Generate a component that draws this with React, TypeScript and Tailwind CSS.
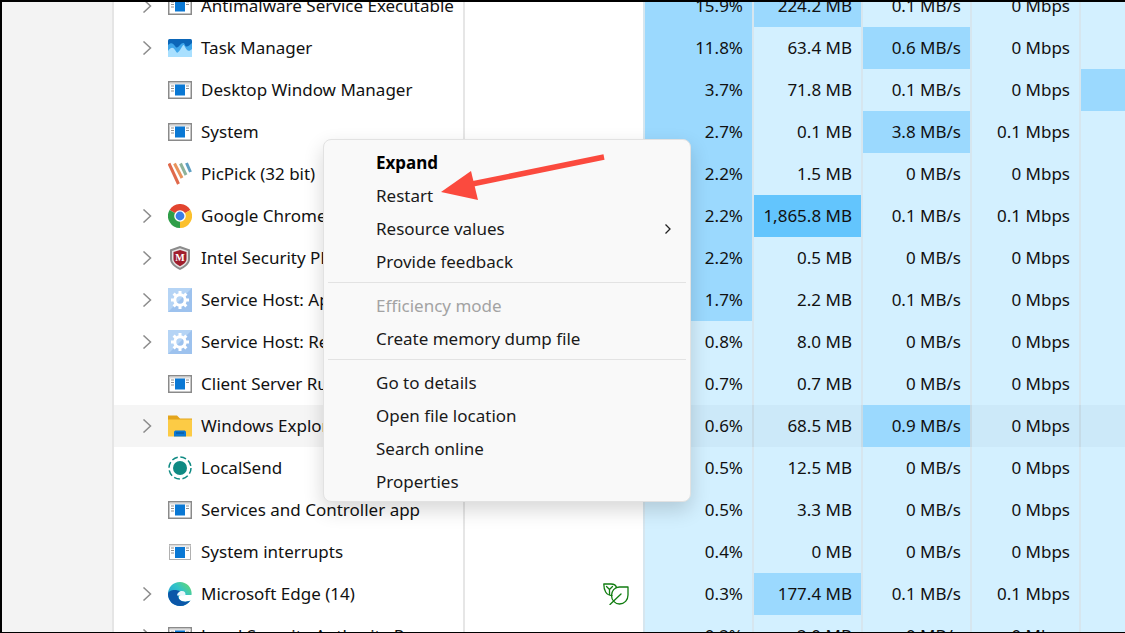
const AppIcon = ({ small }: { small?: boolean }) => (
  <svg width="24" height="24" viewBox="0 0 24 24">
    {small ? (
      <rect x="1.5" y="4.5" width="21" height="15" fill="#fff" stroke="#b0b0b0" />
    ) : (
      <rect x="0.75" y="3.75" width="22.5" height="16.5" fill="#fff" stroke="#8a8a8a" strokeWidth="1.5" />
    )}
    <rect x="1.5" y="5" width="21" height="1.5" fill="#dcdcdc" />
    <rect x="7" y={small ? 7 : 6.5} width="10" height="11" fill="#0a78d4" />
    <path d="M3 8h3M3 10.500h3M3 13h3M18 8h3M18 10.500h3" stroke="#8f8f8f" strokeWidth="1" />
  </svg>
)

const TaskIcon = () => (
  <svg width="24" height="24" viewBox="0 0 24 24">
    <rect y="3" width="24" height="18" rx="1.500" fill="#0b66b8" />
    <path d="M0 9c3-3 5-2 7 1s3 1 5-1 4-3 5 0 4 1 7-2v14H0z" fill="#3fa6ea" />
    <path d="M0 15c3-4 5-4 7-1s2 4 5 0 3-7 5-3 4 5 7 2v8H0z" fill="#a9e0ff" />
  </svg>
)

const PicPickIcon = () => (
  <svg width="24" height="24" viewBox="0 0 24 24">
    <path d="M1 1.500 10.500 22" stroke="#e0694b" strokeWidth="3" />
    <path d="M6.500 1.500 14 16" stroke="#e8935c" strokeWidth="3" />
    <path d="M12.500 1.500 18 13" stroke="#8db39a" strokeWidth="3" />
    <path d="M18.500 1 22.500 10" stroke="#5d9fc2" strokeWidth="3" />
  </svg>
)

const ChromeIcon = () => (
  <svg width="24" height="24" viewBox="0 0 24 24">
    <path d="M12 12 1.600 6A12 12 0 0 1 22.400 6Z" fill="#e2442f" />
    <path d="M12 12 22.400 6A12 12 0 0 1 12 24Z" fill="#fbc02d" />
    <path d="M12 12V24A12 12 0 0 1 1.600 6Z" fill="#2f9e48" />
    <circle cx="12" cy="12" r="5.800" fill="#fff" />
    <circle cx="12" cy="12" r="4.400" fill="#3b7de8" />
  </svg>
)

const ShieldIcon = () => (
  <svg width="24" height="24" viewBox="0 0 24 24">
    <path d="M2 3.500 12 0l10 3.500V13c0 5-5 8.500-10 11C7 21.500 2 18 2 13Z" fill="#8b8b8b" />
    <path d="M4 5 12 2.300 20 5v8c0 4-4 6.800-8 8.800C8 19.800 4 17 4 13Z" fill="#e4e4e4" />
    <path d="M5.500 6 12 4l6.500 2v7c0 3.200-3.200 5.500-6.500 7.200C8.700 18.500 5.500 16.200 5.500 13Z" fill="#a01f2d" />
    <text x="12" y="14.500" textAnchor="middle" fontSize="10" fontWeight="700" fill="#fff" fontFamily="Liberation Serif, serif">M</text>
  </svg>
)

const GearIcon = () => (
  <svg width="24" height="24" viewBox="0 0 24 24">
    <rect width="24" height="24" fill="#b5d4f5" />
    <path d="M0 24 24 0v24z" fill="#9dc2ee" />
    <circle cx="12" cy="12" r="5.200" fill="none" stroke="#fff" strokeWidth="3" />
    {[0, 45, 90, 135, 180, 225, 270, 315].map((a) => (
      <rect key={a} x="10.500" y="3" width="3" height="4" fill="#fff" transform={`rotate(${a} 12 12)`} />
    ))}
  </svg>
)

const FolderIcon = () => (
  <svg width="24" height="24" viewBox="0 0 24 24">
    <path d="M0 1.500h9l3 3h12v3H0z" fill="#e4a51c" />
    <rect y="5.500" width="24" height="17" rx="0.500" fill="#fccb45" />
    <path d="M6 22.500v-4c0-1.500 1-2 2-2h8c1 0 2 .5 2 2v4z" fill="#0a78d4" />
    <rect x="8" y="18.500" width="8" height="1" fill="#074f8c" />
  </svg>
)

const LocalSendIcon = () => (
  <svg width="24" height="24" viewBox="0 0 24 24">
    <circle cx="12" cy="12" r="7" fill="#0f8a83" />
    <circle cx="12" cy="12" r="11" fill="none" stroke="#0f8a83" strokeWidth="1.500" strokeDasharray="6 2.640" />
  </svg>
)

const EdgeIcon = () => (
  <svg width="24" height="24" viewBox="0 0 24 24">
    <defs>
      <linearGradient id="edgeTop" x1="0" y1="1" x2="1" y2="0">
        <stop offset="0" stopColor="#1b8fdc" />
        <stop offset="0.600" stopColor="#33c4c8" />
        <stop offset="1" stopColor="#6fdc5e" />
      </linearGradient>
    </defs>
    <path d="M12 0C5 0 0 5.500 0 12c0 7 5.500 12 12 12 4.500 0 8-2 10.500-5.500-3 1.500-8 1.800-10.500-.500-2-2-1.500-5 1-5h10.500C24.500 6 19 0 12 0Z" fill="url(#edgeTop)" />
    <path d="M0 12c0 7 5.500 12 12 12 4.500 0 8-2 10.500-5.500-3 1.500-8 1.800-10.500-.500-3-3-2-6 .5-8.500C9 7.500 1 7 0 12Z" fill="#0b57a8" />
    <path d="M9 14c0-3 2.500-5 5-5s3.500 1.500 3.500 3.500c0 .500-.500 1-1.500 1H9Z" fill="#e8f7fb" />
  </svg>
)

const LeafIcon = () => (
  <svg width="26" height="22" viewBox="0 0 26 22" fill="none" stroke="#107c10" strokeWidth="1.300" strokeLinejoin="round" strokeLinecap="round">
    <path d="M9 12.500C3 12.500 .8 7 .8 1H8c3 0 5 1.500 5.500 3.500" />
    <path d="M3.500 3.500 6.500 6.500 9.500 3.500M6.500 6.500V11.500" />
    <path d="M25 4H16.500C11.500 4 8.500 8 8.500 12.500 8.500 17.500 12.500 21 16.500 21 21.500 21 25 17 25 12Z" />
    <path d="M7 21.500 18 11" />
  </svg>
)

type Row = {
  name: string
  icon: React.ReactNode
  chevron?: boolean
  hover?: boolean
  leaf?: boolean
  cpu: string
  mem: string
  disk: string
  net: string
  heat: number[]
}

const rows: Row[] = [
  { name: 'Antimalware Service Executable', icon: <AppIcon />, chevron: true, cpu: '15.9%', mem: '224.2 MB', disk: '0.1 MB/s', net: '0 Mbps', heat: [1, 1, 0, 0, 0] },
  { name: 'Task Manager', icon: <TaskIcon />, chevron: true, cpu: '11.8%', mem: '63.4 MB', disk: '0.6 MB/s', net: '0 Mbps', heat: [1, 0, 1, 0, 0] },
  { name: 'Desktop Window Manager', icon: <AppIcon />, cpu: '3.7%', mem: '71.8 MB', disk: '0.1 MB/s', net: '0 Mbps', heat: [1, 0, 0, 0, 1] },
  { name: 'System', icon: <AppIcon />, cpu: '2.7%', mem: '0.1 MB', disk: '3.8 MB/s', net: '0.1 Mbps', heat: [1, 0, 1, 0, 0] },
  { name: 'PicPick (32 bit)', icon: <PicPickIcon />, cpu: '2.2%', mem: '1.5 MB', disk: '0 MB/s', net: '0 Mbps', heat: [1, 0, 0, 0, 0] },
  { name: 'Google Chrome', icon: <ChromeIcon />, chevron: true, cpu: '2.2%', mem: '1,865.8 MB', disk: '0.1 MB/s', net: '0.1 Mbps', heat: [1, 2, 0, 0, 0] },
  { name: 'Intel Security PE', icon: <ShieldIcon />, chevron: true, cpu: '2.2%', mem: '0.5 MB', disk: '0 MB/s', net: '0 Mbps', heat: [1, 0, 0, 0, 0] },
  { name: 'Service Host: Ap', icon: <GearIcon />, chevron: true, cpu: '1.7%', mem: '2.2 MB', disk: '0.1 MB/s', net: '0 Mbps', heat: [1, 0, 0, 0, 0] },
  { name: 'Service Host: Re', icon: <GearIcon />, chevron: true, cpu: '0.8%', mem: '8.0 MB', disk: '0 MB/s', net: '0 Mbps', heat: [0, 0, 0, 0, 0] },
  { name: 'Client Server Ru', icon: <AppIcon />, cpu: '0.7%', mem: '0.7 MB', disk: '0 MB/s', net: '0 Mbps', heat: [0, 0, 0, 0, 0] },
  { name: 'Windows Explorer', icon: <FolderIcon />, chevron: true, hover: true, cpu: '0.6%', mem: '68.5 MB', disk: '0.9 MB/s', net: '0 Mbps', heat: [0, 0, 1, 0, 0] },
  { name: 'LocalSend', icon: <LocalSendIcon />, cpu: '0.5%', mem: '12.5 MB', disk: '0 MB/s', net: '0 Mbps', heat: [0, 0, 0, 0, 0] },
  { name: 'Services and Controller app', icon: <AppIcon />, cpu: '0.5%', mem: '3.3 MB', disk: '0 MB/s', net: '0 Mbps', heat: [0, 0, 0, 0, 0] },
  { name: 'System interrupts', icon: <AppIcon small />, cpu: '0.4%', mem: '0 MB', disk: '0 MB/s', net: '0 Mbps', heat: [0, 0, 0, 0, 0] },
  { name: 'Microsoft Edge (14)', icon: <EdgeIcon />, chevron: true, leaf: true, cpu: '0.3%', mem: '177.4 MB', disk: '0.1 MB/s', net: '0.1 Mbps', heat: [0, 1, 0, 0, 0] },
  { name: 'Local Security Authority Process', icon: <AppIcon />, chevron: true, cpu: '0.2%', mem: '2.0 MB', disk: '0 MB/s', net: '0 Mbps', heat: [0, 0, 0, 0, 0] },
]

function heatClass(level: number, hover?: boolean) {
  if (level === 2) return 'bg-[#63c5fd]'
  if (level === 1) return 'bg-[#9bd9fe]'
  return hover ? 'bg-[#cce9f9]' : 'bg-[#d3f0ff]'
}

function Cell({ value, level, hover }: { value?: string; level: number; hover?: boolean }) {
  return (
    <div className={`h-full w-[107px] shrink-0 pr-[9px] flex items-center justify-end ${heatClass(level, hover)}`}>
      {value}
    </div>
  )
}

const Sep = ({ hover }: { hover?: boolean }) => (
  <div className={`h-full w-[2px] shrink-0 ${hover ? 'bg-[#c6dbe7]' : 'bg-[#d6e6ef]'}`} />
)

function ProcessRow({ row }: { row: Row }) {
  return (
    <div className="flex h-[42px] items-center shrink-0 text-[#111]">
      <div className={`h-full w-[349px] shrink-0 flex items-center ${row.hover ? 'bg-[#f5f5f5]' : 'bg-white'}`}>
        <div className="w-[54px] shrink-0 flex justify-end pr-[16px]">
          {row.chevron && (
            <svg width="10" height="14" viewBox="0 0 10 14" fill="none" stroke="#8c8c8c" strokeWidth="1.500">
              <path d="M1.500 .5 8.500 7 1.500 13.500" />
            </svg>
          )}
        </div>
        <div className="w-[33px] shrink-0 flex">{row.icon}</div>
        <span className="whitespace-nowrap">{row.name}</span>
      </div>
      <div className={`h-full w-[2px] shrink-0 ${row.hover ? 'bg-[#e0e0e0]' : 'bg-[#e6e6e6]'}`} />
      <div className={`h-full w-[178px] shrink-0 flex items-center pl-[138px] ${row.hover ? 'bg-[#f5f5f5]' : 'bg-white'}`}>
        {row.leaf && <LeafIcon />}
      </div>
      <Sep hover={row.hover} />
      <Cell value={row.cpu} level={row.heat[0]} hover={row.hover} />
      <Sep hover={row.hover} />
      <Cell value={row.mem} level={row.heat[1]} hover={row.hover} />
      <Sep hover={row.hover} />
      <Cell value={row.disk} level={row.heat[2]} hover={row.hover} />
      <Sep hover={row.hover} />
      <Cell value={row.net} level={row.heat[3]} hover={row.hover} />
      <Sep hover={row.hover} />
      <div className={`h-full flex-1 ${heatClass(row.heat[4], row.hover)}`} />
    </div>
  )
}

const MenuItem = ({ label, bold, muted, arrow }: { label: string; bold?: boolean; muted?: boolean; arrow?: boolean }) => (
  <div className={`h-[33px] flex items-center justify-between pl-[52px] pr-[18px] ${bold ? 'font-bold text-black' : ''} ${muted ? 'text-[#a3a3a3]' : ''}`}>
    <span>{label}</span>
    {arrow && (
      <svg width="8" height="12" viewBox="0 0 8 12" fill="none" stroke="#222" strokeWidth="1.300">
        <path d="M1.500 1.500 6 6l-4.500 4.500" />
      </svg>
    )}
  </div>
)

const Divider = () => <div className="h-[1px] bg-[#e3e3e3] mx-[4px] mt-[4px] mb-[6px]" />

export default function App() {
  return (
    <div className="relative w-[1125px] h-[633px] overflow-hidden bg-black pt-[2px] pl-[2px] pb-[1px] font-['Noto_Sans',sans-serif] text-[17px]">
      <div className="flex h-full overflow-hidden">
        <div className="w-[112px] shrink-0 bg-[#f3f3f3] border-r-2 border-[#e5e5e5]" />
        <div className="flex-1 flex flex-col -mt-[17px] overflow-hidden">
          {rows.map((r) => (
            <ProcessRow key={r.name} row={r} />
          ))}
        </div>
      </div>

      {/* context menu */}
      <div className="absolute left-[323px] top-[139px] w-[368px] h-[363px] rounded-lg bg-[#f9f9f9] border border-[#e2e2e2] py-[6px] text-[#1a1a1a] shadow-[0_8px_20px_rgba(0,0,0,0.16)]">
        <MenuItem label="Expand" bold />
        <MenuItem label="Restart" />
        <MenuItem label="Resource values" arrow />
        <MenuItem label="Provide feedback" />
        <Divider />
        <MenuItem label="Efficiency mode" muted />
        <MenuItem label="Create memory dump file" />
        <Divider />
        <MenuItem label="Go to details" />
        <MenuItem label="Open file location" />
        <MenuItem label="Search online" />
        <MenuItem label="Properties" />
      </div>

      {/* annotation arrow */}
      <svg className="absolute left-[430px] top-[150px]" width="185" height="60" viewBox="0 0 185 60">
        <path d="M174 7 42 34" stroke="#fb4a3e" strokeWidth="5.500" fill="none" />
        <path d="M11 42 41 21 48 50Z" fill="#fb4a3e" />
      </svg>
    </div>
  )
}
